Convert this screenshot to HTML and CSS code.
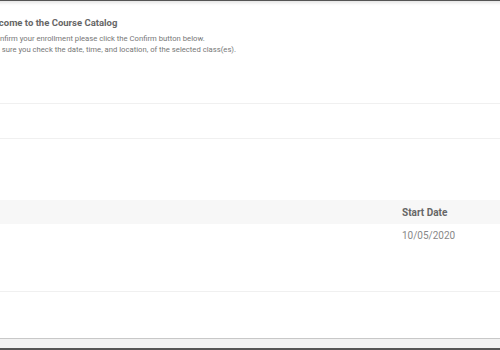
FILE: index.html
```html
<!DOCTYPE html>
<html lang="en">
<head>
    <meta charset="UTF-8">
    <meta name="viewport" content="width=device-width, initial-scale=1.0">
    <title>Course Catalog - Confirm Enrollment</title>
    <link rel="stylesheet" href="styles.css">
</head>
<body>
    <div class="window">
        <div class="top-edge"></div>

        <div class="content">
            <div class="intro">
                <h1>Welcome to the Course Catalog</h1>
                <p>To confirm your enrollment please click the Confirm button below.</p>
                <p>Make sure you check the date, time, and location, of the selected class(es).</p>
            </div>

            <div class="section first"></div>
            <div class="section second"></div>

            <table class="classes">
                <thead>
                    <tr>
                        <th class="col-name"></th>
                        <th class="col-date">Start Date</th>
                    </tr>
                </thead>
                <tbody>
                    <tr>
                        <td class="col-name"></td>
                        <td class="col-date">10/05/2020</td>
                    </tr>
                </tbody>
            </table>

            <div class="section last"></div>
        </div>

        <div class="bottom-edge"></div>
    </div>
</body>
</html>
```

FILE: styles.css
```css
* {
    margin: 0;
    padding: 0;
    box-sizing: border-box;
}

body {
    font-family: 'Roboto', 'Liberation Sans', sans-serif;
    background: #ffffff;
    width: 500px;
    height: 350px;
    overflow: hidden;
}

.window {
    height: 350px;
    display: flex;
    flex-direction: column;
    border-top: 1px solid #555;
    border-bottom: 2px solid #555;
}

.top-edge {
    height: 5px;
    background: linear-gradient(#e6e6e6, #fbfbfb 70%, #ffffff);
    flex-shrink: 0;
}

.content {
    flex: 1;
    margin-left: -19px;
}

.intro {
    height: 98px;
    padding-top: 10px;
    border-bottom: 1px solid #f0f0f0;
}

h1 {
    font-size: 9.5px;
    font-weight: 700;
    color: #666;
    line-height: 14px;
    margin-bottom: 4px;
    margin-left: 2px;
}

.intro p {
    font-size: 7.7px;
    color: #777;
    line-height: 10.5px;
}

.section.first {
    height: 35px;
    border-bottom: 1px solid #f0f0f0;
}

.section.second {
    height: 61px;
}

.classes {
    width: calc(100% + 19px);
    border-collapse: collapse;
    font-size: 10px;
}

.classes th {
    background: #f7f7f7;
    color: #666;
    font-weight: 700;
    text-align: left;
    height: 24px;
    padding: 0;
}

.classes td {
    color: #888;
    height: 67px;
    vertical-align: top;
    padding-top: 6px;
    border-bottom: 1px solid #f0f0f0;
}

.col-name {
    width: 421px;
}

.bottom-edge {
    height: 10px;
    flex-shrink: 0;
    background: #f2f2f2;
    border-top: 1px solid #c8c8c8;
}
```
